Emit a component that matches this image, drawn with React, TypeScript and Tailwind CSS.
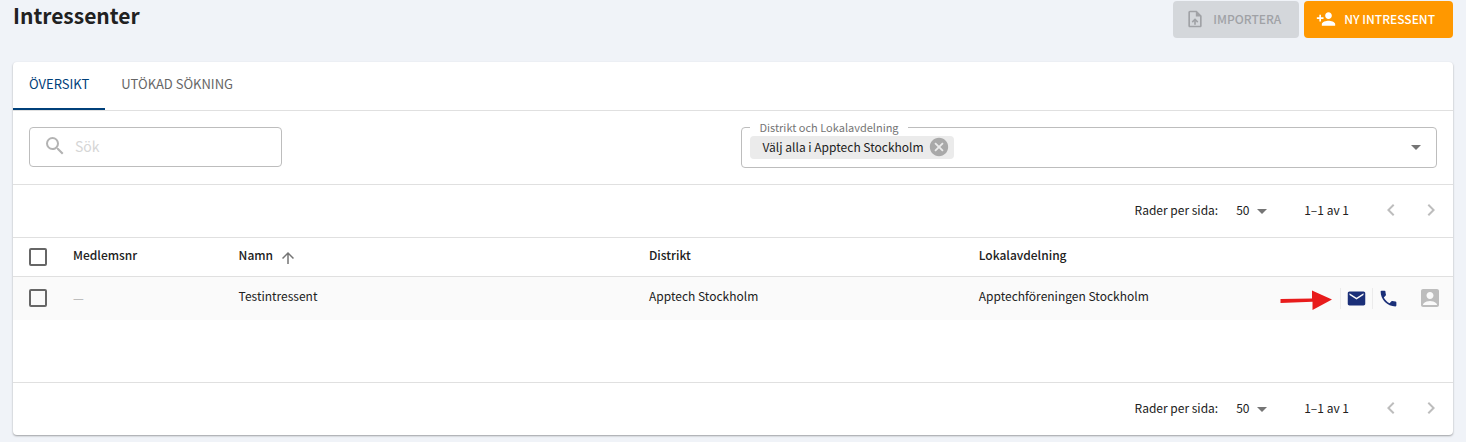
import React, { useState } from 'react';
import {
  MdAccountBox,
  MdArrowDropDown,
  MdArrowUpward,
  MdCancel,
  MdChevronLeft,
  MdChevronRight,
  MdEmail,
  MdOutlineUploadFile,
  MdPersonAdd,
  MdPhone,
  MdSearch
} from 'react-icons/md';

const rows = [
  { id: 1, memberNo: null, name: 'Testintressent', district: 'Apptech Stockholm', department: 'Apptechföreningen Stockholm' }
];

const Pagination: React.FC<{ id: string }> = ({ id }) => (
  <div className="flex h-[52px] items-center justify-end pr-2.5 pb-0.5 text-[12px]">
    <label htmlFor={id} className="mr-4">Rader per sida:</label>
    <div className="relative mr-8 h-6">
      <select id={id} defaultValue="50" className="h-6 w-[38px] appearance-none bg-transparent pl-0.5 outline-none">
        <option value="25">25</option>
        <option value="50">50</option>
        <option value="100">100</option>
      </select>
      <MdArrowDropDown size={24} className="pointer-events-none absolute top-px left-4 text-[#757575]" />
    </div>
    <span className="mr-[30px]">1–1 av 1</span>
    <button type="button" disabled aria-label="Föregående sida" className="mr-4 text-[#bdbdbd]">
      <MdChevronLeft size={24} />
    </button>
    <button type="button" disabled aria-label="Nästa sida" className="text-[#bdbdbd]">
      <MdChevronRight size={24} />
    </button>
  </div>
);

const Checkbox: React.FC<{ label: string }> = ({ label }) => (
  <input
    type="checkbox"
    aria-label={label}
    className="block size-[18px] appearance-none rounded-[2px] border-2 border-[#666] checked:bg-[#00407a]"
  />
);

const App: React.FC = () => {
  const [tab, setTab] = useState<'overview' | 'search'>('overview');
  const [query, setQuery] = useState('');

  return (
    <div className="min-h-screen bg-[#f0f3f8] px-[13px] pt-px pb-[7px] font-['Noto_Sans_CJK_SC','Noto_Sans',sans-serif] text-[12px] text-[#212121]">
      <header className="mb-6 flex items-start justify-between">
        <h1 className="text-[21px] leading-7 font-bold">Intressenter</h1>
        <div className="flex gap-[5px] font-medium">
          <button type="button" disabled className="flex h-[37px] items-center gap-2 rounded bg-[#d4d7db] pr-[18px] pb-0.5 pl-3 text-[#a0a2a6]">
            <MdOutlineUploadFile size={20} />
            IMPORTERA
          </button>
          <button type="button" className="flex h-[37px] items-center gap-2 rounded bg-[#ff9800] pr-[18px] pb-0.5 pl-3 text-white">
            <MdPersonAdd size={20} />
            NY INTRESSENT
          </button>
        </div>
      </header>

      <main className="rounded bg-white shadow-[0_1px_2px_rgba(0,0,0,0.35)]">
        <div role="tablist" className="flex h-[49px] border-b border-[#e0e0e0] text-[13px]">
          <button
            type="button"
            role="tab"
            aria-selected={tab === 'overview'}
            onClick={() => setTab('overview')}
            className={`border-b-2 px-4 pb-0.5 ${tab === 'overview' ? 'border-[#00407a] text-[#00407a]' : 'border-transparent text-[#666]'}`}
          >
            ÖVERSIKT
          </button>
          <button
            type="button"
            role="tab"
            aria-selected={tab === 'search'}
            onClick={() => setTab('search')}
            className={`border-b-2 px-4 pb-0.5 ${tab === 'search' ? 'border-[#00407a] text-[#00407a]' : 'border-transparent text-[#666]'}`}
          >
            UTÖKAD SÖKNING
          </button>
        </div>

        {/* Filters */}
        <div className="flex h-[74px] items-start justify-between border-b border-[#e0e0e0] px-4">
          <label className="mt-4 flex h-10 w-[253px] items-center gap-2 rounded border border-[#bdbdbd] pb-0.5 pl-[13px]">
            <MdSearch size={24} className="shrink-0 text-[#b3b3b3]" />
            <input
              type="text"
              aria-label="Sök"
              placeholder="Sök"
              value={query}
              onChange={e => setQuery(e.target.value)}
              className="w-full bg-transparent text-[14px] outline-none placeholder:text-[#d6d6d6]"
            />
          </label>
          <fieldset className="mt-2 h-[49px] w-[49.4%] rounded border border-[#bdbdbd] px-2">
            <legend className="px-[9px] text-[11px] leading-4 text-[#757575]">
              <label htmlFor="district">Distrikt och Lokalavdelning</label>
            </legend>
            <div className="flex h-6 items-center">
              <span className="flex h-[23px] shrink-0 items-center gap-1 rounded bg-[#ebebeb] pr-1 pl-3">
                Välj alla i Apptech Stockholm
                <button type="button" aria-label="Ta bort" className="text-[#a9a9a9]">
                  <MdCancel size={22} />
                </button>
              </span>
              <input id="district" type="text" className="w-full bg-transparent outline-none" />
              <button type="button" aria-label="Öppna" className="text-[#757575]">
                <MdArrowDropDown size={24} />
              </button>
            </div>
          </fieldset>
        </div>

        <Pagination id="rows-top" />

        <table className="mb-[62px] w-full table-fixed border-t border-[#e0e0e0] text-left">
          <colgroup>
            <col className="w-[60px]" />
            <col className="w-[11.5%]" />
            <col className="w-[28.5%]" />
            <col className="w-[22.9%]" />
            <col />
            <col className="w-[180px]" />
          </colgroup>
          <thead>
            <tr className="h-[39px] border-b border-[#e0e0e0]">
              <th className="pl-4"><Checkbox label="Markera alla" /></th>
              <th className="pb-1 font-medium">Medlemsnr</th>
              <th className="pb-1 font-medium">
                <button type="button" className="flex items-center gap-1.5">
                  Namn
                  <MdArrowUpward size={18} className="mt-1 -mb-px text-[#757575]" />
                </button>
              </th>
              <th className="pb-1 font-medium">Distrikt</th>
              <th className="pb-1 font-medium">Lokalavdelning</th>
              <th />
            </tr>
          </thead>
          <tbody>
            {rows.map(row => (
              <tr key={row.id} className="h-[43px] bg-[#fafafa]">
                <td className="pl-4"><Checkbox label={`Markera ${row.name}`} /></td>
                <td className="font-medium text-[#bdbdbd]">{row.memberNo ?? '—'}</td>
                <td className="pb-1">{row.name}</td>
                <td className="pb-1">{row.district}</td>
                <td className="pb-1">{row.department}</td>
                <td>
                  <div className="flex items-center justify-end pr-[11px]">
                    <svg width="52" height="24" viewBox="0 -4 52 24" className="mr-2 shrink-0" aria-hidden="true">
                      <path d="M0.5 9 L32 8.4 V0.5 L52 9.5 L32.5 20 V11.8 L0.5 13 Z" fill="#e81c1c" />
                    </svg>
                    <a href="#mail" aria-label="E-post" className="border-l border-[#ebebeb] px-[5px] text-[#1a2f78]">
                      <MdEmail size={21} />
                    </a>
                    <a href="#phone" aria-label="Telefon" className="mr-3.5 border-l border-[#ebebeb] px-[5px] text-[#1a2f78]">
                      <MdPhone size={21} />
                    </a>
                    <button type="button" aria-label="Profil" className="text-[#bdbdbd]">
                      <MdAccountBox size={24} />
                    </button>
                  </div>
                </td>
              </tr>
            ))}
          </tbody>
        </table>

        <div className="border-t border-[#e0e0e0]">
          <Pagination id="rows-bottom" />
        </div>
      </main>
    </div>
  );
};

export default App;
